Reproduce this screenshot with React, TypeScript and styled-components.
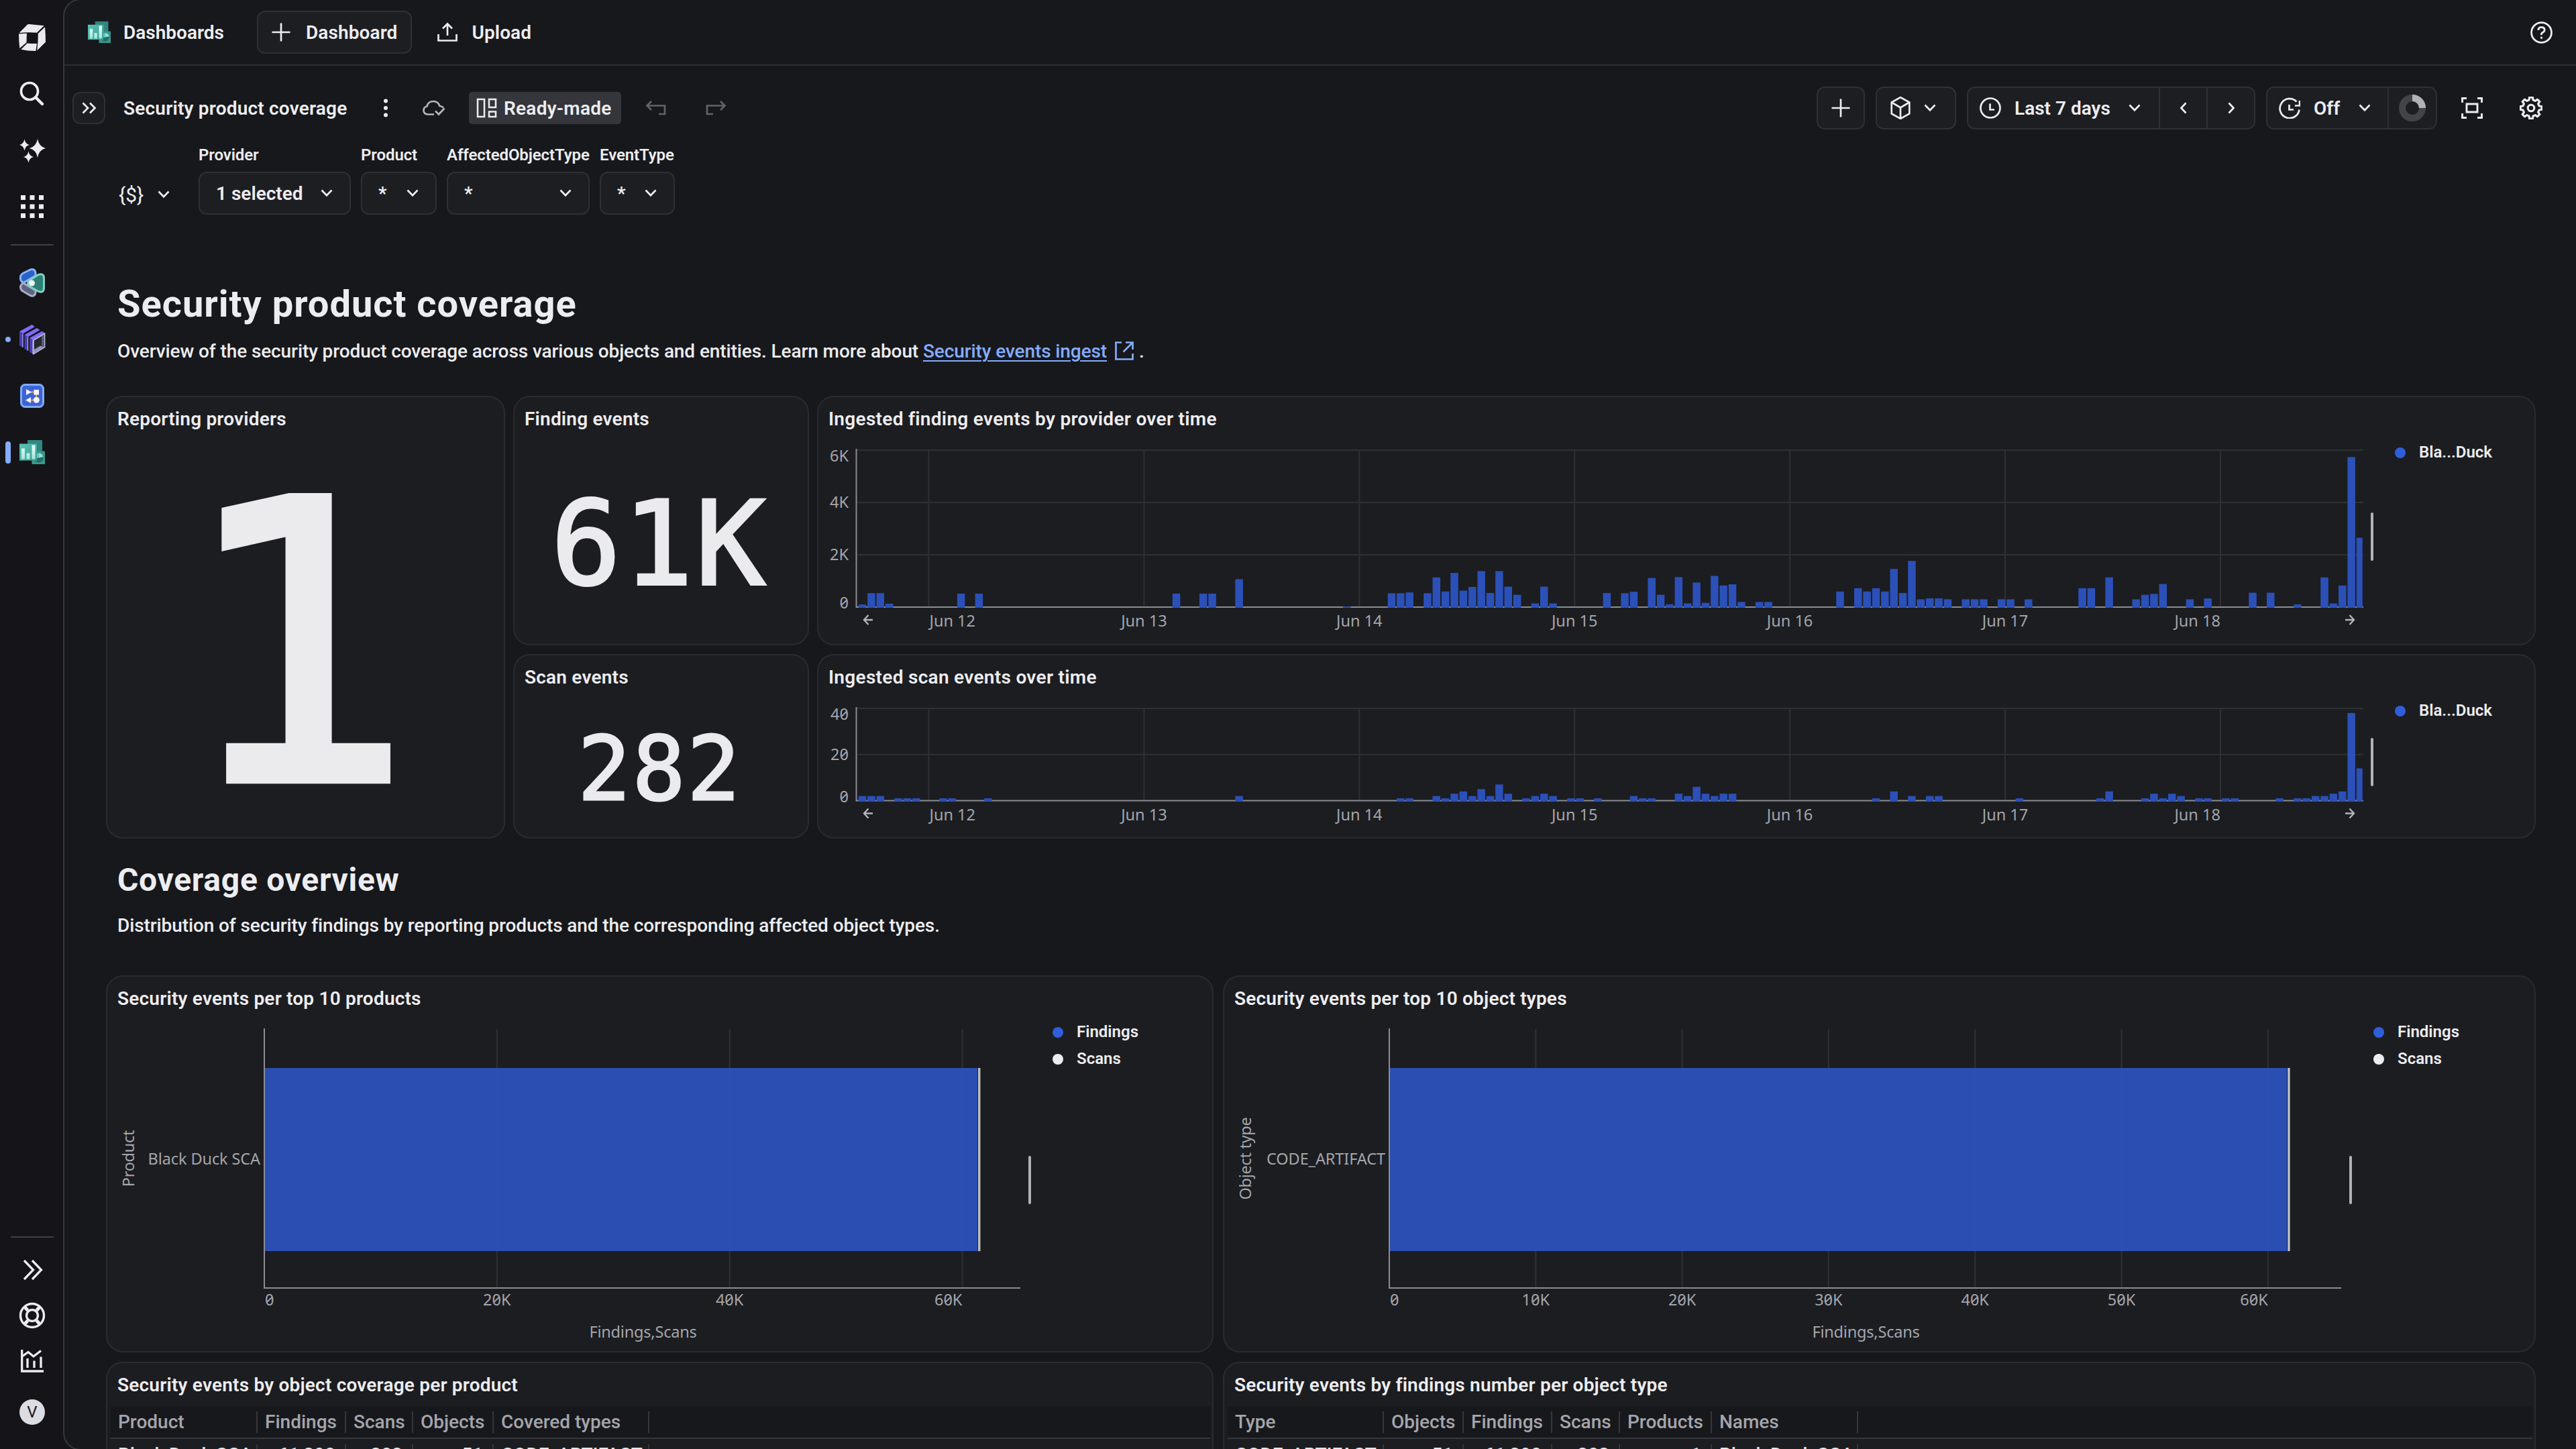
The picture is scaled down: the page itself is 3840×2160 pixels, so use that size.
import React from "react";
import styled, { createGlobalStyle } from "styled-components";

const GlobalStyle = createGlobalStyle`
    * { box-sizing: border-box; }
    body { margin: 0; background: #151418; overflow: hidden; }
    h1, h2, h3, p { margin: 0; }
`

//layout
const Shell = styled.div`
    display: flex;
    width: 3840px;
    height: 2160px;
    overflow: hidden;
    background: #151418;
    color: #ededf0;
    font-family: Roboto, "Noto Sans", sans-serif;
    font-size: 28px;
`

const Sidebar = styled.nav`
    flex: none;
    display: flex;
    flex-direction: column;
    align-items: center;
    width: 94px;
    padding: 14px 0 13px 2px;
`

const Slot = styled.div<{ $h?: number }>`
    position: relative;
    display: flex;
    align-items: center;
    justify-content: center;
    width: 92px;
    height: ${p => p.$h || 84}px;
`

const Marker = styled.span<{ $h: number }>`
    position: absolute;
    left: 6px;
    width: 8px;
    height: ${p => p.$h}px;
    border-radius: 4px;
    background: #84acff;
`

const Divider = styled.div<{ $top: number }>`
    width: 64px;
    height: 2px;
    margin: ${p => p.$top}px 0 14px;
    background: #414147;
`

const Spacer = styled.div`
    flex: 1;
`

const Avatar = styled.div`
    display: flex;
    align-items: center;
    justify-content: center;
    width: 38px;
    height: 38px;
    border-radius: 50%;
    background: #dcdce3;
    color: #17181c;
    font-size: 24px;
`

const Main = styled.main`
    flex: 1;
    min-width: 0;
    display: flex;
    flex-direction: column;
    height: 2164px;
    margin-top: -2px;
    border: 2px solid #36363b;
    border-right: 0;
    border-radius: 26px 0 0 26px;
    background: #17181c;
    overflow: hidden;
`

const AppHeader = styled.header`
    flex: none;
    display: flex;
    align-items: center;
    height: 98px;
    padding: 0 35px 0 35px;
    border-bottom: 2px solid #2d2e32;
    font-weight: 600;
`

const AppTitle = styled.div`
    display: flex;
    align-items: center;
    gap: 19px;
    width: 252px;
`

const HeaderButton = styled.button<{ $plain?: boolean }>`
    display: flex;
    align-items: center;
    gap: ${p => p.$plain ? 21 : 23}px;
    height: 64px;
    padding: 0 20px;
    border: 2px solid ${p => p.$plain ? "transparent" : "#2f3035"};
    border-radius: 12px;
    background: ${p => p.$plain ? "none" : "#1d1e22"};
    color: inherit;
    font: inherit;
    margin-left: ${p => p.$plain ? 16 : 0}px;
    letter-spacing: 0.1px;
`

const Toolbar = styled.div`
    flex: none;
    display: flex;
    align-items: center;
    height: 64px;
    margin: 31px 31px 0 12px;
    font-weight: 600;
`

const Expand = styled.button`
    display: flex;
    align-items: center;
    justify-content: center;
    width: 49px;
    height: 48px;
    margin-right: 27px;
    padding: 0;
    border: 2px solid #2f3035;
    border-radius: 12px;
    background: #1d1e22;
`

const DocName = styled.div`
    width: 371px;
    letter-spacing: 0.2px;
`

const Flat = styled.div<{ $w: number }>`
    display: flex;
    align-items: center;
    justify-content: center;
    width: ${p => p.$w}px;
    height: 64px;
`

const Chip = styled.div`
    display: flex;
    align-items: center;
    gap: 10px;
    width: 227px;
    height: 48px;
    margin-right: 12px;
    padding-left: 11px;
    border-radius: 5px;
    background: #35363b;
    letter-spacing: 0.25px;
`

const Group = styled.div`
    display: flex;
    height: 64px;
    margin-left: 16px;
    border: 2px solid #2f3035;
    border-radius: 12px;
    background: #1d1e22;
`

const Seg = styled.div<{ $w: number, $pl?: number }>`
    display: flex;
    align-items: center;
    justify-content: ${p => p.$pl ? "flex-start" : "center"};
    width: ${p => p.$w}px;
    padding-left: ${p => p.$pl || 0}px;
    & + & { border-left: 2px solid #2f3035; }
`

const SegIcon = styled.span`
    display: flex;
    width: 52px;
`

const SegText = styled.span<{ $w: number }>`
    width: ${p => p.$w}px;
    margin-left: 20px;
    white-space: nowrap;
`

//variables
const Variables = styled.div`
    flex: none;
    display: flex;
    align-items: flex-end;
    gap: 15px;
    height: 101px;
    margin: 26px 0 0 80px;
`

const VarMenu = styled.div`
    display: flex;
    align-items: center;
    gap: 21px;
    width: 105px;
    height: 60px;
    padding-left: 1px;
    font-size: 30px;
`

const Field = styled.div<{ $w: number }>`
    display: flex;
    flex-direction: column;
    gap: 13px;
    width: ${p => p.$w}px;
`

const FieldLabel = styled.label`
    height: 24px;
    line-height: 24px;
    font-size: 24px;
    font-weight: 600;
    letter-spacing: -0.1px;
    white-space: nowrap;
`

const Select = styled.div`
    display: flex;
    align-items: center;
    justify-content: space-between;
    height: 64px;
    padding: 0 25px 0 24px;
    border: 2px solid #2f3035;
    border-radius: 12px;
    background: #1d1e22;
    font-weight: 600;
`

//dashboard
const Board = styled.section`
    padding: 0 60px 0 62px;
`

const Heading = styled.h1`
    margin: 103px 0 0 17px;
    font-size: 56px;
    line-height: 60px;
    font-weight: 700;
    letter-spacing: 1px;
`

const SubHeading = styled.h2`
    margin: 37px 0 0 17px;
    font-size: 48px;
    line-height: 50px;
    font-weight: 700;
    letter-spacing: 0.7px;
`

const Text = styled.p<{ $top: number, $bottom: number }>`
    display: flex;
    align-items: center;
    height: 32px;
    margin: ${p => p.$top}px 0 ${p => p.$bottom}px 17px;
    font-weight: 500;
    letter-spacing: -0.1px;
    white-space: pre;
`

const Link = styled.a`
    color: #84acff;
    text-decoration: underline;
    text-underline-offset: 4px;
    text-decoration-thickness: 2px;
    margin-right: 11px;
`

const TopGrid = styled.div`
    display: grid;
    grid-template-columns: 595px 441px 1fr;
    grid-template-rows: 372px 275px;
    gap: 13px 12px;
`

const Half = styled.div<{ $h: number }>`
    display: grid;
    grid-template-columns: 1651px 1fr;
    grid-template-rows: ${p => p.$h}px;
    gap: 14px;
    margin-bottom: 14px;
`

const Tile = styled.article<{ $tall?: boolean }>`
    display: flex;
    flex-direction: column;
    min-width: 0;
    border: 2px solid #2a2b30;
    border-radius: 25px;
    background: #1c1d21;
    overflow: hidden;
    grid-row: ${p => p.$tall ? "span 2" : "auto"};
`

const TileTitle = styled.h3<{ $ls?: number }>`
    flex: none;
    padding: 1px 0 0 15px;
    height: 64px;
    line-height: 63px;
    font-size: 28px;
    font-weight: 600;
    letter-spacing: ${p => p.$ls || 0.2}px;
    white-space: nowrap;
`

const TileBody = styled.div`
    flex: 1;
    display: flex;
    min-height: 0;
`

const BigNumber = styled.div<{ $size: number }>`
    flex: 1;
    display: flex;
    align-items: center;
    justify-content: center;
    padding: 0.035em 0.03em 0 0;
    font-family: "DejaVu Sans Mono", monospace;
    font-size: ${p => p.$size}px;
    line-height: 1;
    letter-spacing: 0.02em;
    color: #ebebed;
    -webkit-text-stroke: 0.022em #ebebed;
`

const Chart = styled.svg`
    flex: none;
    margin-left: 1px;
`

const Handle = styled.div`
    align-self: center;
    width: 4px;
    height: 72px;
    margin: 0 32px 17px 3px;
    border-radius: 2px;
    background: #b1b1b7;
`

const Legend = styled.div`
    display: flex;
    flex-direction: column;
    gap: 4px;
`

const LegendItem = styled.div<{ $color: string }>`
    display: flex;
    align-items: center;
    gap: 20px;
    height: 36px;
    font-size: 24px;
    font-weight: 600;
    &::before {
        content: "";
        width: 16px;
        height: 16px;
        border-radius: 50%;
        margin-top: 2px;
        background: ${p => p.$color};
    }
`

const AxisText = styled.text`
    fill: #a4a5ac;
    font-family: "Noto Sans", "Open Sans", sans-serif;
    font-size: 23.5px;
    font-feature-settings: "zero";
    dominant-baseline: central;
`

//table
const Table = styled.div`
    margin: 0 3px 0 5px;
`

const Row = styled.div<{ $head?: boolean, $cols: string }>`
    display: grid;
    grid-template-columns: ${p => p.$cols};
    align-items: center;
    height: ${p => p.$head ? 49 : 50}px;
    border-bottom: 2px solid ${p => p.$head ? "#36373c" : "transparent"};
    background: ${p => p.$head ? "#17181c" : "none"};
    color: ${p => p.$head ? "#a4a5ac" : "#e6e6ea"};
    font-weight: 500;
`

const Cell = styled.div<{ $right?: boolean }>`
    height: 32px;
    line-height: 32px;
    padding: 0 14px 0 11px;
    border-right: 2px solid #36373c;
    text-align: ${p => p.$right ? "right" : "left"};
    white-space: nowrap;
`

//icons
const line = { fill: "none", stroke: "currentColor", strokeWidth: 2.7 };

const Chevron = () => <svg width="18" height="12" viewBox="0 0 18 12" {...line}><path d="M1.5 1.5 9 9.2 16.5 1.5" /></svg>
const Side = ({ d }: { d: string }) => <svg width="12" height="18" viewBox="0 0 12 18" {...line}><path d={d} /></svg>
const Plus = () => <svg width="28" height="28" viewBox="0 0 28 28" {...line}><path d="M14 0.5V27.5M0.5 14H27.5" /></svg>
const Icon = ({ size = 32, w = 2.7, children }: { size?: number, w?: number, children: React.ReactNode }) =>
    <svg width={size} height={size} viewBox="0 0 32 32" {...line} strokeWidth={w}>{children}</svg>

const star = (x: number, y: number, rx: number, ry: number) =>
    `M${x} ${y - ry}Q${x + rx * 0.17} ${y - ry * 0.17} ${x + rx} ${y}Q${x + rx * 0.17} ${y + ry * 0.17} ${x} ${y + ry}Q${x - rx * 0.17} ${y + ry * 0.17} ${x - rx} ${y}Q${x - rx * 0.17} ${y - ry * 0.17} ${x} ${y - ry}Z`;

const gear = Array.from({ length: 8 }, (_, i) => {
    return [[-14, 11.6], [-9, 15], [9, 15], [14, 11.6]].map(([a, r]) => {
        const t = (i * 45 + a - 90) * Math.PI / 180;
        return `${(16 + r * Math.cos(t)).toFixed(2)},${(16 + r * Math.sin(t)).toFixed(2)}`;
    }).join(" ");
}).join(" ");

const Logo = () => (
    <svg width="40" height="40" viewBox="0 0 40 40" fill="#ebebed">
        <path d="M.7 13 12.5 1Q13.6 0 15 0L37.7 2.3 27 12.7Q14 11.5.7 13Z" />
        <path d="M0 14.6Q6 13.7 12 13.7 11.5 20 11.6 27.3L1.3 36Q0 25 0 14.6Z" />
        <path d="M3.3 37.8 12.5 28.4Q20 29.2 27 29L25.3 40Q13 40 3.3 37.8Z" />
        <path d="M28.8 14 39 4.3Q40 15 40 26.7L27.3 39.3Q29 26 28.8 14Z" />
    </svg>
)

const DashboardIcon = ({ size }: { size: number }) => (
    <svg width={size} height={size} viewBox="0 0 38 38">
        <defs>
            <linearGradient id="teal" x1="0" y1="0" x2="1" y2="1"><stop offset="0" stopColor="#5cc4b6" /><stop offset="1" stopColor="#3a9c90" /></linearGradient>
            <linearGradient id="bars" x1="0" y1="0" x2="0" y2="1"><stop offset="0" stopColor="#ecfffb" /><stop offset="1" stopColor="#9ee6dc" /></linearGradient>
        </defs>
        <rect x="12" y="1" width="22" height="18" fill="#2f877f" />
        <rect x="18.5" y="17.5" width="19.5" height="19.5" fill="#3a978d" />
        <circle cx="28.5" cy="27.5" r="7" fill="#256f69" />
        <path d="M28.5 27.5V20.5A7 7 0 0 1 35.3 26Z" fill="#8fe3d6" />
        <path d="M28.5 27.5 21.7 28.5A7 7 0 0 1 28.5 20.5Z" fill="#6cc8bc" />
        <rect x="0" y="6.5" width="26" height="25" fill="url(#teal)" />
        <path d="M3 13.5h5V29.5H3ZM10.5 20.5h5v9h-5ZM18.5 8.5h5v21h-5Z" fill="url(#bars)" />
    </svg>
)

const PaneIcon = () => (
    <svg width="40" height="44" viewBox="0 0 40 44" strokeLinejoin="round">
        <path d="M2.5 14Q2.5 9.5 6 7.5L17 2Q25 0 25 8V11L7 21.5Q2 19 2.5 14Z" fill="#2a62c9" stroke="#8ab4ff" strokeWidth="3" />
        <path d="M2.5 28Q2.5 24 7 22L25 33V36Q24 43 17 40.5L6 34Q2.5 32 2.5 28Z" fill="#5d6480" stroke="#a7aec9" strokeWidth="3" />
        <path d="M16 18 29 9.5Q37.5 7 37.5 14V30Q37 37 29.5 34.5L16 27Q11 22.5 16 18Z" fill="#2b7f73" stroke="#7fd0c2" strokeWidth="3" />
        <circle cx="19.5" cy="22" r="4.5" fill="#f1f3f8" />
    </svg>
)

const StackIcon = () => (
    <svg width="40" height="46" viewBox="0 0 40 46">
        {[0, 7.5, 15].map((o, i) => (
            <g key={i} transform={`translate(${o} ${i * 4.9})`}>
                <path d="M1 11 19.5 1 24 4 6 14.5Z" fill="#7f6bfb" />
                <path d="M1 11 6 14.5V35L1 32Z" fill="#4a3cb4" />
                <path d="M6 14.5V35" stroke="#b5b2ee" strokeWidth="1.2" />
            </g>
        ))}
        <path d="M22 24 38.5 14.5V34.5L22 44.5Z" fill="#26272f" stroke="#b9bedb" strokeWidth="1.7" />
        <path d="M23 43 23 38 32 32.5 37.5 34Z" fill="#8f97b8" />
        <path d="M34 18 37.8 15.8V34L34 32Z" fill="#595e74" />
    </svg>
)

const FlowIcon = () => (
    <svg width="36" height="36" viewBox="0 0 36 36">
        <rect x="1.5" y="1.5" width="33" height="33" rx="6" fill="#3e63d6" stroke="#7fabf3" strokeWidth="3" />
        <path d="M12 12.5H24V24.5H12" fill="none" stroke="#e6a34a" strokeWidth="2" />
        <path d="M9 8 17 12.5 9 17ZM20.5 9h7.5v7.5h-7.5ZM16 20 8 24.5 16 29Z" fill="#f5f6fb" />
        <circle cx="24.3" cy="24.3" r="4.5" fill="#f5f6fb" />
    </svg>
)

const Clock = () => <Icon><circle cx="16" cy="16" r="14.5" /><path d="M15.5 9.5V18.5H22" /></Icon>

//hour, value
const findings: [number, number][] = [
    [0, 100], [1, 535], [2, 535], [3, 130], [11, 515], [13, 515], [35, 515], [38, 515], [39, 515], [42, 1067], [54, 25],
    [59, 530], [60, 530], [61, 560], [63, 530], [64, 1135], [65, 596], [66, 1308], [67, 630], [68, 770], [69, 1376], [70, 540],
    [71, 1376], [72, 780], [73, 470], [75, 140], [76, 780], [77, 140], [83, 540], [85, 530], [86, 585], [88, 1113], [89, 470],
    [90, 105], [91, 1147], [92, 140], [93, 940], [94, 160], [95, 1193], [96, 826], [97, 872], [98, 195], [100, 195], [101, 195],
    [109, 596], [111, 723], [112, 596], [113, 723], [114, 596], [115, 1457], [116, 540], [117, 1766], [118, 298], [119, 333],
    [120, 333], [121, 298], [123, 298], [124, 298], [125, 298], [127, 298], [128, 298], [130, 298], [136, 723], [137, 723],
    [139, 1135], [142, 298], [143, 470], [144, 505], [145, 883], [148, 298], [150, 333], [155, 550], [157, 550], [160, 100],
    [163, 1135], [164, 140], [165, 826], [166, 5735], [167, 2650],
];

const scans: [number, number][] = [
    [0, 2], [1, 2], [2, 2], [4, 1], [5, 1], [6, 1], [9, 1], [10, 1], [14, 1], [42, 2], [60, 1], [61, 1], [64, 2], [65, 1], [66, 3],
    [67, 4], [68, 2], [69, 5], [70, 2], [71, 7], [72, 3], [74, 1], [75, 2], [76, 3], [77, 2], [79, 1], [80, 1], [82, 1], [86, 2],
    [87, 1], [88, 1], [91, 3], [92, 2], [93, 6], [94, 3], [95, 2], [96, 3], [97, 3], [113, 1], [115, 4], [117, 2], [119, 2],
    [120, 2], [129, 1], [138, 1], [139, 4], [143, 1], [144, 3], [145, 1], [146, 3], [147, 2], [149, 1], [150, 1], [152, 1],
    [153, 1], [158, 1], [160, 1], [161, 1], [162, 2], [163, 2], [164, 3], [165, 4], [166, 38], [167, 14],
];

const days = ["Jun 12", "Jun 13", "Jun 14", "Jun 15", "Jun 16", "Jun 17", "Jun 18"];

type TimeProps = { data: [number, number][], max: number, plot: number, height: number, ticks: string[] }

const TimeChart = ({ data, max, plot, height, ticks }: TimeProps) => {
    const base = 15 + plot;
    const step = plot / (ticks.length - 1);
    return (
        <Chart width="2310" height={height}>
            {ticks.map((t, i) => {
                const y = base - i * step;
                const shift = i === 0 ? -7 : i === ticks.length - 1 ? 7.5 : -1;
                return (
                    <g key={t}>
                        {i > 0 && <path d={`M56 ${y}H2302`} stroke="#2f3035" strokeWidth="2" />}
                        <AxisText x="44" y={y + shift} textAnchor="end">{t}</AxisText>
                    </g>
                )
            })}
            {days.map((d, i) => {
                const x = 163.5 + i * 320.9;
                const first = i === 0, last = i === days.length - 1;
                return (
                    <g key={d}>
                        <path d={`M${x} 15V${base}`} stroke="#2f3035" strokeWidth="2" />
                        <AxisText x={first ? x + 1 : x} y={base + 20} textAnchor={first ? "start" : last ? "end" : "middle"}>{d}</AxisText>
                    </g>
                )
            })}
            <path d={`M55.5 ${base}H2302`} stroke="#8b8c92" strokeWidth="2" />
            {data.map(([k, v]) => {
                const h = v / max * plot;
                return <rect key={k} x={58.8 + k * 13.371} y={base - h} width={k === 167 ? 9 : 11.5} height={h + 1} fill="#2b50b8" />
            })}
            <path d={`M55.5 13V${base + 1}`} stroke="#8b8c92" strokeWidth="2" />
            <g fill="none" stroke="#b4b5bb" strokeWidth="2.4">
                <path d={`M80 ${base + 19}H67M73.5 ${base + 12}L67 ${base + 19}L73.5 ${base + 26}`} />
                <path d={`M2275 ${base + 19}H2288M2281.5 ${base + 12}L2288 ${base + 19}L2281.5 ${base + 26}`} />
            </g>
        </Chart>
    )
}

type BarProps = { left: number, width: number, perK: number, ticks: number[], axis: string, category: string }

const BarChart = ({ left, width, perK, ticks, axis, category }: BarProps) => {
    const end = left + perK * 61.3;
    return (
        <Chart width={width} height="494">
            {ticks.map((t, i) => {
                const x = left + t * perK;
                const last = i === ticks.length - 1;
                return (
                    <g key={t}>
                        {i > 0 && <path d={`M${x} 14V400`} stroke="#2f3035" strokeWidth="2" />}
                        <AxisText x={i === 0 ? x + 1 : x} y="417" textAnchor={i === 0 ? "start" : last ? "end" : "middle"}>{t ? t + "K" : "0"}</AxisText>
                    </g>
                )
            })}
            <rect x={left} y="72" width={end - left} height="273" fill="#2b51bb" fillOpacity="0.95" />
            <rect x={end + 1} y="72" width="3.5" height="273" fill="#bfbfc5" />
            <path d={`M${left} 13V400H${width - 9}`} fill="none" stroke="#8b8c92" strokeWidth="2" />
            <AxisText x={left - 6} y="207" textAnchor="end" letterSpacing="-0.1">{category}</AxisText>
            <AxisText x={(left + width - 9) / 2 + 1} y="465" textAnchor="middle" letterSpacing="-0.2">Findings,Scans</AxisText>
            <AxisText transform="translate(30 207) rotate(-90)" textAnchor="middle" letterSpacing="-0.3">{axis}</AxisText>
        </Chart>
    )
}

const Variable = ({ name, value, w }: { name: string, value: string, w: number }) => (
    <Field $w={w}>
        <FieldLabel>{name}</FieldLabel>
        <Select><span>{value}</span><Chevron /></Select>
    </Field>
)

type TableProps = { cols: string, head: string[], row: string[] }

const DataTable = ({ cols, head, row }: TableProps) => (
    <Table>
        <Row $head $cols={cols}>{head.map(h => <Cell key={h}>{h}</Cell>)}</Row>
        <Row $cols={cols}>{row.map((v, i) => <Cell key={i} $right={/^\d/.test(v)}>{v}</Cell>)}</Row>
    </Table>
)

export const App = () => {
    return (
        <Shell>
            <GlobalStyle />
            <Sidebar>
                <Slot><Logo /></Slot>
                <Slot>
                    <svg width="38" height="38" viewBox="0 0 38 38" {...line} strokeWidth="3.7"><circle cx="15" cy="15" r="12.5" /><path d="M24 24 34 34" strokeWidth="4.5" strokeLinecap="round" /></svg>
                </Slot>
                <Slot>
                    <svg width="40" height="40" viewBox="0 0 40 40" fill="currentColor"><path d={star(28, 17, 12, 14) + star(8.5, 12, 7.5, 8.5) + star(14.5, 30, 7.5, 8.5)} /></svg>
                </Slot>
                <Slot>
                    <svg width="34" height="34" viewBox="0 0 34 34" fill="currentColor">
                        {[0, 13.5, 27].map(y => [0, 13.5, 27].map(x => <rect key={x + "-" + y} x={x} y={y} width="7" height="7" />))}
                    </svg>
                </Slot>
                <Divider $top={14} />
                <Slot><PaneIcon /></Slot>
                <Slot><Marker $h={8} /><StackIcon /></Slot>
                <Slot><FlowIcon /></Slot>
                <Slot><Marker $h={33} /><DashboardIcon size={38} /></Slot>
                <Spacer />
                <Divider $top={0} />
                <Slot $h={68}>
                    <svg width="34" height="32" viewBox="0 0 34 32" {...line} strokeWidth="3.3"><path d="M5 2 18.5 16 5 30M17 2 30.5 16 17 30" /></svg>
                </Slot>
                <Slot $h={68}>
                    <svg width="40" height="40" viewBox="0 0 40 40" {...line} strokeWidth="3.4">
                        <circle cx="20" cy="20" r="17.5" /><circle cx="20" cy="20" r="8.5" />
                        <path d="M8.5 7 13.5 12.5M31.5 7 26.5 12.5M8.5 33 13.5 27.5M31.5 33 26.5 27.5" strokeWidth="5" />
                    </svg>
                </Slot>
                <Slot $h={68}>
                    <svg width="34" height="34" viewBox="0 0 34 34" {...line} strokeWidth="3.3"><path d="M1.7 0V32H34M2 10 11 3.5 19 10 30 1.5M10 13V27M20 16.5V27M30 10.5V27" /></svg>
                </Slot>
                <Slot $h={84}><Avatar>V</Avatar></Slot>
            </Sidebar>
            <Main>
                <AppHeader>
                    <AppTitle><DashboardIcon size={34} />Dashboards</AppTitle>
                    <HeaderButton><Plus />Dashboard</HeaderButton>
                    <HeaderButton $plain>
                        <svg width="30" height="30" viewBox="0 0 30 30" {...line}><path d="M1.5 18V27.5H28.5V18M15 20V3M8 9.5 15 2.5 22 9.5" /></svg>
                        Upload
                    </HeaderButton>
                    <Spacer />
                    <Icon size={33}><circle cx="16" cy="16" r="14.5" /><path d="M11.5 12.5Q11.5 8.3 16 8.3T20.5 12.2Q20.5 14.5 18 15.8T16 19.5M16 22V25" /></Icon>
                </AppHeader>
                <Toolbar>
                    <Expand><svg width="22" height="18" viewBox="0 0 22 18" {...line} color="#ededf0"><path d="M1.5 1.5 9 9 1.5 16.5M12 1.5 19.5 9 12 16.5" /></svg></Expand>
                    <DocName>Security product coverage</DocName>
                    <Flat $w={40}>
                        <svg width="8" height="28" viewBox="0 0 8 28" fill="currentColor"><circle cx="4" cy="3.5" r="3" /><circle cx="4" cy="14" r="3" /><circle cx="4" cy="24.5" r="3" /></svg>
                    </Flat>
                    <Flat $w={104}>
                        <svg width="34" height="24" viewBox="0 0 34 24" {...line} color="#b4b5bb"><path d="M17 21.5H8Q1.5 21 1.5 15.5 1.5 10.5 6.5 9.5 8 2 16 2 23 2 25.5 9 29 9.5 31 11.5M19 16.5 24 21.5 32.5 12.5" /></svg>
                    </Flat>
                    <Chip>
                        <svg width="31" height="30" viewBox="0 0 31 30" {...line} strokeWidth="2.5"><path d="M2 2H12V28H2ZM19 2H29V14H19ZM19 20.5H29V28H19Z" /></svg>
                        Ready-made
                    </Chip>
                    <Flat $w={80}>
                        <svg width="32" height="22" viewBox="0 0 32 22" {...line} color="#626369"><path d="M9 1 2.5 7.5 9 14M2.5 7.5H29V20H20" /></svg>
                    </Flat>
                    <Flat $w={97}>
                        <svg width="32" height="22" viewBox="0 0 32 22" {...line} color="#626369"><path d="M23 1 29.5 7.5 23 14M29.5 7.5H3V20H12" /></svg>
                    </Flat>
                    <Spacer />
                    <Group><Seg $w={68}><Plus /></Seg></Group>
                    <Group>
                        <Seg $w={116} $pl={18}>
                            <SegIcon><Icon size={34} w={2.5}><path d="M16 1 28.5 8V24L16 31 3.5 24V8ZM3.5 8 16 15.5 28.5 8M16 15.5V31" /></Icon></SegIcon>
                            <Chevron />
                        </Seg>
                    </Group>
                    <Group>
                        <Seg $w={284} $pl={17}><Clock /><SegText $w={170}>Last 7 days</SegText><Chevron /></Seg>
                        <Seg $w={71}><Side d="M9.5 1.5 2.5 9 9.5 16.5" /></Seg>
                        <Seg $w={71}><Side d="M2.5 1.5 9.5 9 2.5 16.5" /></Seg>
                    </Group>
                    <Group>
                        <Seg $w={179} $pl={17}>
                            <Icon><path d="M26.5 6.5A14.5 14.5 0 1 0 30.5 18.5M31 5V12.5H24M15.5 11V18.5H22" /></Icon>
                            <SegText $w={67}>Off</SegText><Chevron />
                        </Seg>
                        <Seg $w={72}>
                            <svg width="40" height="40" viewBox="0 0 40 40" fill="none" strokeWidth="10"><circle cx="20" cy="20" r="15" stroke="#434349" /><path d="M20 5A15 15 0 0 1 35 20" stroke="#b1b1b7" /></svg>
                        </Seg>
                    </Group>
                    <Flat $w={104}>
                        <Icon w={2.9}><path d="M1.5 8V1.5H8M24 1.5H30.5V8M30.5 24V30.5H24M8 30.5H1.5V24M8 10H24V22H8Z" /></Icon>
                    </Flat>
                    <Flat $w={72}>
                        <Icon size={34} w={2.9}><polygon points={gear} strokeLinejoin="round" /><circle cx="16" cy="16" r="4.5" /></Icon>
                    </Flat>
                </Toolbar>
                <Variables>
                    <VarMenu>{"{$}"}<Chevron /></VarMenu>
                    <Variable name="Provider" value="1 selected" w={227} />
                    <Variable name="Product" value="*" w={113} />
                    <Variable name="AffectedObjectType" value="*" w={213} />
                    <Variable name="EventType" value="*" w={112} />
                </Variables>
                <Board>
                    <Heading>Security product coverage</Heading>
                    <Text $top={24} $bottom={51}>
                        {"Overview of the security product coverage across various objects and entities. Learn more about "}
                        <Link>Security events ingest</Link>
                        <svg width="30" height="30" viewBox="0 0 30 30" {...line} color="#84acff"><path d="M11 2.5H2.5V27.5H27.5V19M17 2.5H27.5V13M27.5 2.5 13.5 16.5" /></svg>
                        {" ."}
                    </Text>
                    <TopGrid>
                        <Tile $tall>
                            <TileTitle>Reporting providers</TileTitle>
                            <TileBody><BigNumber $size={577}>1</BigNumber></TileBody>
                        </Tile>
                        <Tile>
                            <TileTitle>Finding events</TileTitle>
                            <TileBody><BigNumber $size={173}>61K</BigNumber></TileBody>
                        </Tile>
                        <Tile>
                            <TileTitle $ls={0.3}>Ingested finding events by provider over time</TileTitle>
                            <TileBody>
                                <TimeChart data={findings} max={6000} plot={234} height={303} ticks={["0", "2K", "4K", "6K"]} />
                                <Handle />
                                <Legend><LegendItem $color="#2f5edb">Bla...Duck</LegendItem></Legend>
                            </TileBody>
                        </Tile>
                        <Tile>
                            <TileTitle>Scan events</TileTitle>
                            <TileBody><BigNumber $size={131}>282</BigNumber></TileBody>
                        </Tile>
                        <Tile>
                            <TileTitle $ls={0.3}>Ingested scan events over time</TileTitle>
                            <TileBody>
                                <TimeChart data={scans} max={40} plot={137.5} height={206} ticks={["0", "20", "40"]} />
                                <Handle />
                                <Legend><LegendItem $color="#2f5edb">Bla...Duck</LegendItem></Legend>
                            </TileBody>
                        </Tile>
                    </TopGrid>
                    <SubHeading>Coverage overview</SubHeading>
                    <Text $top={26} $bottom={59}>Distribution of security findings by reporting products and the corresponding affected object types.</Text>
                    <Half $h={562}>
                        <Tile>
                            <TileTitle>Security events per top 10 products</TileTitle>
                            <TileBody>
                                <BarChart left={233} width={1369} perK={17.34} ticks={[0, 20, 40, 60]} axis="Product" category="Black Duck SCA" />
                                <Handle />
                                <Legend>
                                    <LegendItem $color="#2f5edb">Findings</LegendItem>
                                    <LegendItem $color="#ededf0">Scans</LegendItem>
                                </Legend>
                            </TileBody>
                        </Tile>
                        <Tile>
                            <TileTitle>Security events per top 10 object types</TileTitle>
                            <TileBody>
                                <BarChart left={245} width={1673} perK={21.83} ticks={[0, 10, 20, 30, 40, 50, 60]} axis="Object type" category="CODE_ARTIFACT" />
                                <Handle />
                                <Legend>
                                    <LegendItem $color="#2f5edb">Findings</LegendItem>
                                    <LegendItem $color="#ededf0">Scans</LegendItem>
                                </Legend>
                            </TileBody>
                        </Tile>
                    </Half>
                    <Half $h={300}>
                        <Tile>
                            <TileTitle>Security events by object coverage per product</TileTitle>
                            <DataTable
                                cols="219px 132px 100px 120px 232px"
                                head={["Product", "Findings", "Scans", "Objects", "Covered types"]}
                                row={["Black Duck SCA", "61,298", "282", "51", "CODE_ARTIFACT"]}
                            />
                        </Tile>
                        <Tile>
                            <TileTitle>Security events by findings number per object type</TileTitle>
                            <DataTable
                                cols="233px 119px 132px 101px 137px 218px"
                                head={["Type", "Objects", "Findings", "Scans", "Products", "Names"]}
                                row={["CODE_ARTIFACT", "51", "61,298", "282", "1", "Black Duck SCA"]}
                            />
                        </Tile>
                    </Half>
                </Board>
            </Main>
        </Shell>
    )
}

export default App;
